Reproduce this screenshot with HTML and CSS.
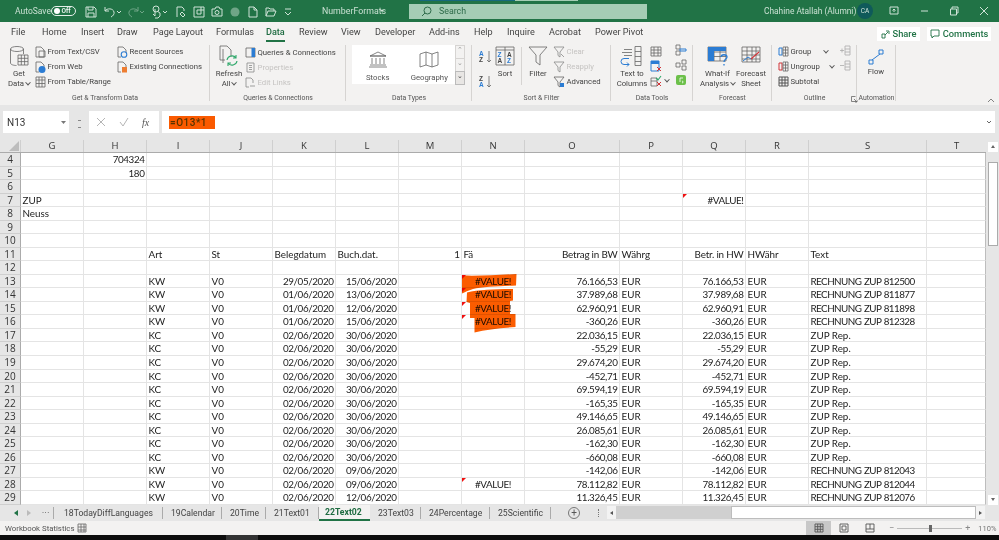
FILE: index.html
```html
<!DOCTYPE html>
<html lang="en">
<head>
<meta charset="utf-8">
<title>NumberFormats</title>
<link rel="stylesheet" href="styles.css">
</head>
<body>
<div class="app">
  <header class="title">
    <span class="autosave">AutoSave</span>
    <span class="toggle"><i></i>Off</span>
    <div class="qat">
      <svg width="12" height="12" viewBox="0 0 12 12"><path d="M1 1h8l2 2v8H1zM3 1v3h5V1M3 11V7h6v4"/></svg>
      <svg class="m7" width="12" height="12" viewBox="0 0 12 12"><path d="M1 1v4h4M1 5c2-3 8-3 9 1 .5 2-1 4-3 5"/></svg>
      <svg class="car" width="6" height="12" viewBox="0 0 6 12"><path d="M1 5l2 2 2-2"/></svg>
      <svg class="m5 dim" width="12" height="12" viewBox="0 0 12 12"><path d="M11 1v4H7M11 5C9 2 3 2 2 6c-.5 2 1 4 3 5"/></svg>
      <svg class="car dim" width="6" height="12" viewBox="0 0 6 12"><path d="M1 5l2 2 2-2"/></svg>
      <svg class="m5" width="12" height="14" viewBox="0 0 12 14"><circle cx="6" cy="4" r="3"/><path d="M5 4v7l-2-2M7 6l3 2v3l-2 2H5"/></svg>
      <svg class="car" width="6" height="12" viewBox="0 0 6 12"><path d="M1 5l2 2 2-2"/></svg>
      <svg class="m8" width="12" height="12" viewBox="0 0 12 12"><path d="M2 11V1h5l2 2v2M5 8l2-2 3 3-2 2z"/></svg>
      <svg class="m6" width="12" height="12" viewBox="0 0 12 12"><path d="M1 1h10v10H1zM4 4h4v4H4zM8 1v3h3"/></svg>
      <svg class="m6" width="12" height="12" viewBox="0 0 12 12"><path d="M1 3h3l1-2h3l1 2h2v7H1z"/><circle cx="6" cy="6.5" r="2"/></svg>
      <svg class="m6 dim" width="12" height="12" viewBox="0 0 12 12"><circle class="fil" cx="6" cy="6" r="4.500"/></svg>
      <svg class="m6" width="12" height="12" viewBox="0 0 12 12"><path d="M2 1h5l3 3v7H2zM7 1v3h3"/></svg>
      <svg class="m6" width="12" height="12" viewBox="0 0 12 12"><path d="M1 10V2h3l1 1h4v2M1 10l2-5h8l-2 5z"/></svg>
      <svg class="m8" width="8" height="12" viewBox="0 0 8 12"><path d="M1 3h6M1 6l3 3 3-3"/></svg>
    </div>
    <span class="docname">NumberFormats</span>
    <svg class="m4 car" width="6" height="12" viewBox="0 0 6 12"><path class="fil" d="M1 5h4L3 7z"/></svg>
    <div class="search">
      <svg width="11" height="11" viewBox="0 0 11 11"><circle cx="6.500" cy="4.500" r="3.500"/><path d="M4 7l-3 3"/></svg>
      <span>Search</span>
    </div>
    <span class="user">Chahine Atallah (Alumni)</span>
    <span class="avatar">CA</span>
    <div class="winbtns">
      <svg width="10" height="10" viewBox="0 0 10 10"><path d="M1 1h8v7H1zM5 6V3M3.500 4.500L5 3l1.500 1.500"/></svg>
      <svg width="10" height="10" viewBox="0 0 10 10"><path d="M2 5h7"/></svg>
      <svg width="10" height="10" viewBox="0 0 10 10"><path d="M1.500 3h6v6h-6zM3 3V1h6v6H7.500"/></svg>
      <svg width="10" height="10" viewBox="0 0 10 10"><path d="M1 1l8 8M9 1l-8 8"/></svg>
    </div>
    <i class="strip-a"></i><i class="strip-b"></i>
  </header>

  <nav class="tabs">
    <div class="tablist">
      <span>File</span><span>Home</span><span>Insert</span><span>Draw</span><span>Page Layout</span><span>Formulas</span><span class="on">Data</span><span>Review</span><span>View</span><span>Developer</span><span>Add-ins</span><span>Help</span><span>Inquire</span><span>Acrobat</span><span>Power Pivot</span>
    </div>
    <div class="acts">
      <span class="act act-share"><svg width="9" height="10" viewBox="0 0 9 10"><path d="M1 9V5h3v4zM4 6l3-3M5 2h3v3"/></svg>Share</span>
      <span class="act act-comm"><svg width="10" height="10" viewBox="0 0 10 10"><path d="M1 1h8v6H4L2 9V7H1z"/></svg>Comments</span>
    </div>
  </nav>

  <section class="ribbon">
    <div class="grp g1">
      <div class="body">
        <div class="lg w-get">
          <svg width="20" height="22" viewBox="0 0 20 22"><ellipse class="ln" cx="8" cy="4" rx="6.500" ry="2.500"/><path class="ln" d="M1.500 4v14c0 1.500 3 2.500 6 2.500M14.500 4v5"/><path class="ln" d="M9 10h10v10H9zM9 13.300h10M9 16.600h10M12.300 10v10M15.600 10v10"/></svg>
          <span>Get</span><span>Data <u class="cv"></u></span>
        </div>
        <div class="col c-from">
          <div class="si"><svg width="11" height="12" viewBox="0 0 11 12"><path class="ln" d="M1 1h5l3 3v7H1zM4 5h6v6H4z"/></svg>From Text/CSV</div>
          <div class="si"><svg width="11" height="12" viewBox="0 0 11 12"><path class="ln" d="M1 1h5l3 3v3M1 1v10h3"/><circle class="bl" cx="7" cy="8.500" r="3.500"/></svg>From Web</div>
          <div class="si"><svg width="11" height="12" viewBox="0 0 11 12"><path class="ln" d="M1 1h9v10H1zM1 4h9M1 7.500h9M4 1v10M7 1v10"/></svg>From Table/Range</div>
        </div>
        <div class="col">
          <div class="si"><svg width="11" height="12" viewBox="0 0 11 12"><path class="ln" d="M1 1h5l3 3v3M1 1v10h3"/><circle class="blr" cx="7" cy="8.500" r="2.800"/></svg>Recent Sources</div>
          <div class="si"><svg width="11" height="12" viewBox="0 0 11 12"><path class="ln" d="M1 1h5l3 3v3M1 1v10h3"/><rect class="or" x="5" y="6" width="5" height="5.500"/></svg>Existing Connections</div>
        </div>
      </div>
      <div class="lab">Get &amp; Transform Data</div>
    </div>

    <div class="grp g2">
      <div class="body">
        <div class="lg w-ref">
          <svg width="22" height="22" viewBox="0 0 22 22"><path class="ln" d="M2 1h7l4 4v7M2 1v14h5M5 4v14"/><path class="gr" d="M9 15a5 5 0 0 1 9-2M19 16a5 5 0 0 1-9 2M18 10v3h-3M10 21v-3h3"/></svg>
          <span>Refresh</span><span>All <u class="cv"></u></span>
        </div>
        <div class="col c-q">
          <div class="si qc"><svg width="11" height="11" viewBox="0 0 11 11"><path class="ln" d="M1 1h9v9H1z"/><rect class="bf" x="6.500" y="1" width="3.500" height="9"/></svg>Queries &amp; Connections</div>
          <div class="si off"><svg width="11" height="11" viewBox="0 0 11 11"><path class="ln" d="M2 1h7v9H2zM4 3.500h3M4 5.500h3M4 7.500h3"/></svg>Properties</div>
          <div class="si off"><svg width="11" height="11" viewBox="0 0 11 11"><path class="ln" d="M1 1h5l2 2v3M1 1v9h3M5 9h5"/></svg>Edit Links</div>
        </div>
      </div>
      <div class="lab">Queries &amp; Connections</div>
    </div>

    <div class="grp g3">
      <div class="body">
        <div class="gallery">
          <div class="gi">
            <svg width="20" height="17" viewBox="0 0 20 17"><path class="ln" d="M2 5l8-4 8 4zM2 5h16M4 7v6M8 7v6M12 7v6M16 7v6M2 14h16M1 16h18"/></svg>
            <span>Stocks</span>
          </div>
          <div class="gi">
            <svg width="20" height="17" viewBox="0 0 20 17"><path class="ln" d="M1 3l6-2 6 2 6-2v13l-6 2-6-2-6 2zM7 1v13M13 3v13"/></svg>
            <span>Geography</span>
          </div>
        </div>
        <div class="gscroll"><b>⌃</b><b>⌄</b><b class="more">⌄</b></div>
      </div>
      <div class="lab">Data Types</div>
    </div>

    <div class="grp g4">
      <div class="body">
        <div class="col c-az">
          <svg class="az" width="13" height="13" viewBox="0 0 13 13"><text class="azt" x="0" y="6">A</text><text class="azt b" x="0" y="12">Z</text><path class="ln" d="M10 1v11M8 10l2 2 2-2"/></svg>
          <svg class="az" width="13" height="13" viewBox="0 0 13 13"><text class="azt b" x="0" y="6">Z</text><text class="azt" x="0" y="12">A</text><path class="ln" d="M10 1v11M8 10l2 2 2-2"/></svg>
        </div>
        <div class="lg w-sort">
          <svg width="20" height="20" viewBox="0 0 20 20"><path class="ln" d="M1 1h18v18H1zM10 1v18M1 4h18"/><text class="azt" x="2.500" y="11">Z</text><text class="azt b" x="2.500" y="17">A</text><text class="azt b" x="12" y="11">A</text><text class="azt" x="12" y="17">Z</text></svg>
          <span>Sort</span>
        </div>
        <i class="vsep"></i>
        <div class="lg w-fil">
          <svg width="20" height="20" viewBox="0 0 20 20"><path class="ln" d="M1 1h18l-7 8v10l-4-3V9z"/></svg>
          <span>Filter</span>
        </div>
        <div class="col c-f">
          <div class="si off"><svg width="12" height="12" viewBox="0 0 12 12"><path class="ln" d="M1 1h10L7 6v5L5 9.500V6zM8 8l3 3"/></svg>Clear</div>
          <div class="si off"><svg width="12" height="12" viewBox="0 0 12 12"><path class="ln" d="M1 1h10L7 6v5L5 9.500V6z"/></svg>Reapply</div>
          <div class="si"><svg width="12" height="12" viewBox="0 0 12 12"><path class="ln" d="M1 1h10L7 6v5L5 9.500V6z"/><rect class="bl" x="7" y="7" width="4" height="4"/></svg>Advanced</div>
        </div>
      </div>
      <div class="lab">Sort &amp; Filter</div>
    </div>

    <div class="grp g5">
      <div class="body">
        <div class="lg w-ttc">
          <svg width="24" height="21" viewBox="0 0 24 21"><path class="ln" d="M4 4h8M2 7h10M4 10h8M15 1h6v19h-6zM15 6h6M15 11h6M15 16h6"/><path class="bs" d="M9 13H4a3 3 0 0 0 0 6h5M7 17l2 2-2 2"/></svg>
          <span>Text to</span><span>Columns</span>
        </div>
        <div class="col c-t1">
          <svg width="12" height="12" viewBox="0 0 12 12"><path class="ln" d="M1 2h10v9H1zM1 5h10M1 8h10M4 2v9M8 2v9"/></svg>
          <svg width="12" height="12" viewBox="0 0 12 12"><path class="bs" d="M1 1h8v10H1z"/><rect class="bf" x="1" y="1" width="8" height="3"/><path class="rd" d="M7 7l4 4M11 7l-4 4"/></svg>
          <div class="t1r"><svg width="12" height="12" viewBox="0 0 12 12"><path class="ln" d="M1 3h6v8H1zM1 6h6"/><path class="gr" d="M6 3l2 2 3-4"/><path class="rd" d="M7 7l4 4M11 7l-4 4"/></svg><u class="cv"></u></div>
        </div>
        <div class="col c-t2">
          <svg width="12" height="12" viewBox="0 0 12 12"><path class="ln" d="M1 1h4v4H1zM1 7h4v4H1z"/><path class="bs" d="M5 5h6v2H5z"/></svg>
          <svg width="12" height="12" viewBox="0 0 12 12"><path class="ln" d="M1 4h4v4H1zM7 1h4v4H7zM7 7h4v4H7z"/></svg>
          <svg width="12" height="12" viewBox="0 0 12 12"><rect class="grf" x="1" y="1" width="10" height="10" rx="2"/><path class="wh" d="M5 8V4h3M7 9a1 1 0 1 0 0-2"/></svg>
        </div>
      </div>
      <div class="lab">Data Tools</div>
    </div>

    <div class="grp g6">
      <div class="body">
        <div class="lg w-wi">
          <svg width="21" height="20" viewBox="0 0 21 20"><path class="ln" d="M1 1h18v14H1zM1 6h18M1 10.500h18M7 1v14M13 1v14"/><rect class="bf" x="1" y="1" width="18" height="4"/><rect class="bf" x="1" y="5" width="6" height="10"/><path class="bq" d="M14 11c0-3 6-3 6 0 0 2-3 2-3 5M17 18v1.500"/></svg>
          <span>What-If</span><span>Analysis <u class="cv"></u></span>
        </div>
        <div class="lg w-fc">
          <svg width="20" height="20" viewBox="0 0 20 20"><path class="ln" d="M1 1h18v15H1zM1 5h18M1 9h18M1 13h18M6 1v15M11 1v15M15 1v15"/><path class="bs" d="M2 15l5-4 3 2"/><path class="rdl" d="M10 13l8-7"/></svg>
          <span>Forecast</span><span>Sheet</span>
        </div>
      </div>
      <div class="lab">Forecast</div>
    </div>

    <div class="grp g7">
      <div class="body">
        <div class="col c-o">
          <div class="si"><svg width="11" height="11" viewBox="0 0 11 11"><path class="bs" d="M1 2h3v7H1z"/><path class="ln" d="M5 1h5v9H5zM5 4h5M5 7h5M7.500 1v9"/></svg>Group<u class="cv cv-g"></u></div>
          <div class="si"><svg width="11" height="11" viewBox="0 0 11 11"><path class="rd" d="M1 2h3v7H1z"/><path class="ln" d="M5 1h5v9H5zM5 4h5M5 7h5M7.500 1v9"/></svg>Ungroup<u class="cv cv-u"></u></div>
          <div class="si"><svg width="11" height="11" viewBox="0 0 11 11"><path class="ln2" d="M1 1h9v9H1zM1 4h9M1 7h9M4 1v9M7 1v9"/></svg>Subtotal</div>
        </div>
        <div class="col c-o2">
          <svg class="dimmed" width="11" height="11" viewBox="0 0 11 11"><path class="ln" d="M5 1h5v9H5zM5 4h5M5 7h5M0 5.500h4M2 3.500v4"/></svg>
          <svg class="dimmed" width="11" height="11" viewBox="0 0 11 11"><path class="ln" d="M5 1h5v9H5zM5 4h5M5 7h5M0 5.500h4"/></svg>
        </div>
      </div>
      <div class="lab">Outline</div>
      <svg class="launch" width="7" height="7" viewBox="0 0 7 7"><path class="ln" d="M.500.500h4M.500.500v5h5V3M3 3l3 3M4 6h2V4"/></svg>
    </div>

    <div class="grp g8">
      <div class="body">
        <div class="lg w-flow">
          <svg width="16" height="16" viewBox="0 0 16 16"><path class="bs" d="M1 11h4v4H1zM11 1h4v4h-4zM4 11l8-6"/></svg>
          <span>Flow</span>
        </div>
      </div>
      <div class="lab">Automation</div>
    </div>
    <svg class="collapse" width="8" height="6" viewBox="0 0 8 6"><path class="ln" d="M1 5l3-3 3 3"/></svg>
  </section>

  <section class="fbar">
    <div class="namebox">N13<svg width="5" height="3" viewBox="0 0 5 3"><path d="M0 0h5L2.500 3z"/></svg></div>
    <div class="grip"></div>
    <div class="fxbox">
      <svg width="10" height="10" viewBox="0 0 10 10"><path d="M1 1l8 8M9 1L1 9"/></svg>
      <svg width="10" height="10" viewBox="0 0 10 10"><path d="M1 5l3 4 5-8"/></svg>
      <span>fx</span>
    </div>
    <div class="finput"><span class="fhl">=O13*1</span><svg width="6" height="4" viewBox="0 0 6 4"><path d="M1 1l2 2 2-2"/></svg></div>
  </section>

  <section class="sheet">
    <div class="grid">
      <div class="hd">
        <span class="corner"></span><span>G</span><span>H</span><span>I</span><span>J</span><span>K</span><span>L</span><span>M</span><span>N</span><span>O</span><span>P</span><span>Q</span><span>R</span><span>S</span><span>T</span>
      </div>
      <div class="row"><span class="rh">4</span><span></span><span class="r">704324</span><span></span><span></span><span></span><span></span><span></span><span></span><span></span><span></span><span></span><span></span><span></span><span></span></div>
      <div class="row"><span class="rh">5</span><span></span><span class="r">180</span><span></span><span></span><span></span><span></span><span></span><span></span><span></span><span></span><span></span><span></span><span></span><span></span></div>
      <div class="row"><span class="rh">6</span><span></span><span></span><span></span><span></span><span></span><span></span><span></span><span></span><span></span><span></span><span></span><span></span><span></span><span></span></div>
      <div class="row"><span class="rh">7</span><span>ZUP</span><span></span><span></span><span></span><span></span><span></span><span></span><span></span><span></span><span></span><span class="r note">#VALUE!</span><span></span><span></span><span></span></div>
      <div class="row"><span class="rh">8</span><span>Neuss</span><span></span><span></span><span></span><span></span><span></span><span></span><span></span><span></span><span></span><span></span><span></span><span></span><span></span></div>
      <div class="row"><span class="rh">9</span><span></span><span></span><span></span><span></span><span></span><span></span><span></span><span></span><span></span><span></span><span></span><span></span><span></span><span></span></div>
      <div class="row"><span class="rh">10</span><span></span><span></span><span></span><span></span><span></span><span></span><span></span><span></span><span></span><span></span><span></span><span></span><span></span><span></span></div>
      <div class="row"><span class="rh">11</span><span></span><span></span><span>Art</span><span>St</span><span>Belegdatum</span><span>Buch.dat.</span><span class="r">1</span><span>Fä</span><span class="rt">Betrag in BW</span><span>Währg</span><span class="rt">Betr. in HW</span><span>HWähr</span><span>Text</span><span></span></div>
      <div class="row"><span class="rh">12</span><span></span><span></span><span></span><span></span><span></span><span></span><span></span><span></span><span></span><span></span><span></span><span></span><span></span><span></span></div>
      <div class="row"><span class="rh">13</span><span></span><span></span><span>KW</span><span>V0</span><span class="r">29/05/2020</span><span class="r">15/06/2020</span><span></span><span class="m note">#VALUE!</span><span class="r">76.166,53</span><span>EUR</span><span class="r">76.166,53</span><span>EUR</span><span class="t">RECHNUNG ZUP 812500</span><span></span></div>
      <div class="row"><span class="rh">14</span><span></span><span></span><span>KW</span><span>V0</span><span class="r">01/06/2020</span><span class="r">13/06/2020</span><span></span><span class="m note">#VALUE!</span><span class="r">37.989,68</span><span>EUR</span><span class="r">37.989,68</span><span>EUR</span><span class="t">RECHNUNG ZUP 811877</span><span></span></div>
      <div class="row"><span class="rh">15</span><span></span><span></span><span>KW</span><span>V0</span><span class="r">01/06/2020</span><span class="r">12/06/2020</span><span></span><span class="m note">#VALUE!</span><span class="r">62.960,91</span><span>EUR</span><span class="r">62.960,91</span><span>EUR</span><span class="t">RECHNUNG ZUP 811898</span><span></span></div>
      <div class="row"><span class="rh">16</span><span></span><span></span><span>KW</span><span>V0</span><span class="r">01/06/2020</span><span class="r">15/06/2020</span><span></span><span class="m note">#VALUE!</span><span class="r">-360,26</span><span>EUR</span><span class="r">-360,26</span><span>EUR</span><span class="t">RECHNUNG ZUP 812328</span><span></span></div>
      <div class="row"><span class="rh">17</span><span></span><span></span><span>KC</span><span>V0</span><span class="r">02/06/2020</span><span class="r">30/06/2020</span><span></span><span></span><span class="r">22.036,15</span><span>EUR</span><span class="r">22.036,15</span><span>EUR</span><span>ZUP Rep.</span><span></span></div>
      <div class="row"><span class="rh">18</span><span></span><span></span><span>KC</span><span>V0</span><span class="r">02/06/2020</span><span class="r">30/06/2020</span><span></span><span></span><span class="r">-55,29</span><span>EUR</span><span class="r">-55,29</span><span>EUR</span><span>ZUP Rep.</span><span></span></div>
      <div class="row"><span class="rh">19</span><span></span><span></span><span>KC</span><span>V0</span><span class="r">02/06/2020</span><span class="r">30/06/2020</span><span></span><span></span><span class="r">29.674,20</span><span>EUR</span><span class="r">29.674,20</span><span>EUR</span><span>ZUP Rep.</span><span></span></div>
      <div class="row"><span class="rh">20</span><span></span><span></span><span>KC</span><span>V0</span><span class="r">02/06/2020</span><span class="r">30/06/2020</span><span></span><span></span><span class="r">-452,71</span><span>EUR</span><span class="r">-452,71</span><span>EUR</span><span>ZUP Rep.</span><span></span></div>
      <div class="row"><span class="rh">21</span><span></span><span></span><span>KC</span><span>V0</span><span class="r">02/06/2020</span><span class="r">30/06/2020</span><span></span><span></span><span class="r">69.594,19</span><span>EUR</span><span class="r">69.594,19</span><span>EUR</span><span>ZUP Rep.</span><span></span></div>
      <div class="row"><span class="rh">22</span><span></span><span></span><span>KC</span><span>V0</span><span class="r">02/06/2020</span><span class="r">30/06/2020</span><span></span><span></span><span class="r">-165,35</span><span>EUR</span><span class="r">-165,35</span><span>EUR</span><span>ZUP Rep.</span><span></span></div>
      <div class="row"><span class="rh">23</span><span></span><span></span><span>KC</span><span>V0</span><span class="r">02/06/2020</span><span class="r">30/06/2020</span><span></span><span></span><span class="r">49.146,65</span><span>EUR</span><span class="r">49.146,65</span><span>EUR</span><span>ZUP Rep.</span><span></span></div>
      <div class="row"><span class="rh">24</span><span></span><span></span><span>KC</span><span>V0</span><span class="r">02/06/2020</span><span class="r">30/06/2020</span><span></span><span></span><span class="r">26.085,61</span><span>EUR</span><span class="r">26.085,61</span><span>EUR</span><span>ZUP Rep.</span><span></span></div>
      <div class="row"><span class="rh">25</span><span></span><span></span><span>KC</span><span>V0</span><span class="r">02/06/2020</span><span class="r">30/06/2020</span><span></span><span></span><span class="r">-162,30</span><span>EUR</span><span class="r">-162,30</span><span>EUR</span><span>ZUP Rep.</span><span></span></div>
      <div class="row"><span class="rh">26</span><span></span><span></span><span>KC</span><span>V0</span><span class="r">02/06/2020</span><span class="r">30/06/2020</span><span></span><span></span><span class="r">-660,08</span><span>EUR</span><span class="r">-660,08</span><span>EUR</span><span>ZUP Rep.</span><span></span></div>
      <div class="row"><span class="rh">27</span><span></span><span></span><span>KW</span><span>V0</span><span class="r">02/06/2020</span><span class="r">09/06/2020</span><span></span><span></span><span class="r">-142,06</span><span>EUR</span><span class="r">-142,06</span><span>EUR</span><span class="t">RECHNUNG ZUP 812043</span><span></span></div>
      <div class="row"><span class="rh">28</span><span></span><span></span><span>KW</span><span>V0</span><span class="r">02/06/2020</span><span class="r">09/06/2020</span><span></span><span class="m note">#VALUE!</span><span class="r">78.112,82</span><span>EUR</span><span class="r">78.112,82</span><span>EUR</span><span class="t">RECHNUNG ZUP 812044</span><span></span></div>
      <div class="row"><span class="rh">29</span><span></span><span></span><span>KW</span><span>V0</span><span class="r">02/06/2020</span><span class="r">12/06/2020</span><span></span><span></span><span class="r">11.326,45</span><span>EUR</span><span class="r">11.326,45</span><span>EUR</span><span class="t">RECHNUNG ZUP 812076</span><span></span></div>
      <svg class="scribble" width="56" height="60" viewBox="0 0 56 60">
        <path d="M0 1.500C18 2 36 1 54.500 0L54 11.500C40 12 20 12.500 11 15 6 16.500 3 18 0 19.500Z"/>
        <path d="M5 18.500C16 15.500 36 15 51 15L51 26.500 48 27 48 40 53.500 40 53.500 53C38 54 24 55.500 12.500 58.500L12.500 44 8 44 8 29 4.500 28Z"/>
      </svg>
    </div>
    <aside class="vscroll">
      <b class="vb up"></b>
      <i class="vthumb"></i>
      <b class="vb down"></b>
    </aside>
  </section>

  <section class="sheettabs">
    <div class="navs"><span class="nav-l"></span><span class="nav-r"></span><span class="nav-d">...</span></div>
    <span class="st w1">18TodayDiffLanguages</span>
    <span class="st w2">19Calendar</span>
    <span class="st w3">20Time</span>
    <span class="st w4">21Text01</span>
    <span class="st st-on w5">22Text02</span>
    <span class="st w6">23Text03</span>
    <span class="st w7">24Percentage</span>
    <span class="st w8">25Scientific</span>
    <span class="plus">+</span>
    <span class="dots"></span>
    <div class="hscroll"><b class="hb"><u class="al"></u></b><i class="hthumb"></i><b class="hb"><u class="ar"></u></b></div>
  </section>

  <footer class="status">
    <span class="wbs">Workbook Statistics</span>
    <svg class="wbi" width="10" height="10" viewBox="0 0 10 10"><path d="M1 1h8v8H1zM1 4h8M1 7h8M4 1v8M7 1v8"/></svg>
    <div class="views">
      <span class="vw vw-on"><svg width="10" height="10" viewBox="0 0 10 10"><path d="M1 1h8v8H1zM1 3.700h8M1 6.300h8M3.700 1v8M6.300 1v8"/></svg></span>
      <span class="vw"><svg width="10" height="10" viewBox="0 0 10 10"><path d="M1 1h8v8H1zM3 3h4v4H3z"/></svg></span>
      <span class="vw"><svg width="10" height="10" viewBox="0 0 10 10"><path d="M1 1h8v8H1zM1 6h8M5 1v5"/></svg></span>
    </div>
    <div class="zoom"><span class="zb">−</span><div class="slider"><i></i></div><span class="zb">+</span></div>
    <span class="pct">110%</span>
  </footer>
  <div class="taskbar"><i></i></div>
</div>
</body>
</html>
```
FILE: styles.css
```css
* { box-sizing: border-box; }
html, body { margin: 0; padding: 0; }
body { width: 999px; height: 540px; overflow: hidden; font-family: Roboto, "Open Sans", sans-serif; color: #333; background: #e6e6e6; }
.app { width: 999px; height: 540px; display: flex; flex-direction: column; }
u { text-decoration: none; }
svg { display: block; flex: none; fill: none; }

/* title bar */
.title { height: 22px; flex: none; background: #217346; display: flex; align-items: center; position: relative; color: #c9e0d2; font-size: 8.500px; padding-left: 15px; }
.title svg { stroke: #cfe3d7; stroke-width: 1; }
.title svg .fil { fill: #cfe3d7; stroke: none; }
.autosave { width: 32px; white-space: nowrap; }
.toggle { margin-left: 4px; width: 25px; height: 10px; border: 1px solid #e5efe9; border-radius: 5px; display: flex; align-items: center; font-size: 6.500px; font-weight: 500; color: #fff; gap: 2px; padding-left: 1.500px; }
.toggle i { width: 6px; height: 6px; border-radius: 50%; background: #fff; }
.qat { display: flex; align-items: center; margin-left: 9px; margin-top: 1px; }
.m7 { margin-left: 7px; } .m5 { margin-left: 5px; } .m8 { margin-left: 7px; } .m6 { margin-left: 6px; } .m4 { margin-left: 3px; }
.car { margin-left: 0; }
.dim { opacity: .45; }
.docname { margin-left: 30px; font-size: 8.800px; width: 57px; white-space: nowrap; }
.search { margin-left: 24px; width: 238px; height: 15px; background: #a5cdb5; display: flex; align-items: center; color: #2d6a49; font-size: 8.800px; padding-left: 12px; gap: 7px; }
.search svg { stroke: #2d6a49; }
.user { margin-left: 117px; font-size: 8.400px; white-space: nowrap; width: 89px; }
.avatar { margin-left: 4px; width: 16px; height: 16px; border-radius: 50%; background: #0f5a5a; color: #cfe3d7; font-size: 6.500px; display: flex; align-items: center; justify-content: center; }
.winbtns { margin-left: 16px; display: flex; gap: 20px; }
.strip-a, .strip-b { position: absolute; top: 0; height: 1px; }
.strip-a { left: 420px; width: 95px; background: #16697c; }
.strip-b { left: 515px; width: 63px; background: #a5cdb5; }

/* tabs */
.tabs { height: 21px; flex: none; background: #f3f2f1; display: flex; align-items: center; justify-content: space-between; padding: 2px 8px 0 11px; }
.tablist { display: grid; grid-template-columns: 31px 39px 36px 36px 63px 50px 33px 42px 34px 54px 45px 33px 42px 46px 60px; font-size: 9.100px; color: #444; height: 19px; line-height: 16px; }
.tablist span { white-space: nowrap; position: relative; }
.tablist .on { font-weight: 500; color: #1e6b41; }
.tablist .on::after { content: ""; position: absolute; left: 0; top: 16px; width: 19px; height: 2px; background: #217346; }
.acts { display: flex; gap: 7px; }
.act { height: 14px; background: #fff; display: flex; align-items: center; font-size: 9.300px; font-weight: 500; color: #217346; gap: 3px; justify-content: center; }
.act svg { stroke: #217346; stroke-width: .9; }
.act-share { width: 43px; }
.act-comm { width: 64px; }

/* ribbon */
.ribbon { height: 62px; flex: none; background: #f3f2f1; display: flex; position: relative; font-size: 7.750px; color: #444; }
.grp { position: relative; height: 62px; display: flex; flex-direction: column; flex: none; }
.grp::after { content: ""; position: absolute; right: 0; top: 2px; height: 56px; width: 1px; background: #d6d4d2; }
.body { height: 49px; display: flex; flex: none; }
.lab { height: 12px; line-height: 12px; text-align: center; font-size: 6.900px; color: #555; white-space: nowrap; }
.g1 { width: 210px; } .g2 { width: 136px; } .g3 { width: 126px; } .g4 { width: 139px; } .g5 { width: 82px; } .g6 { width: 79px; } .g7 { width: 85px; } .g8 { width: 39px; }
.g1 .body { padding-left: 7px; } .g2 .body { padding-left: 5px; } .g3 .body { padding-left: 6px; } .g4 .body { padding-left: 7px; } .g5 .body { padding-left: 5px; } .g6 .body { padding-left: 6px; } .g7 .body { padding-left: 6px; }
.lg { display: flex; flex-direction: column; align-items: center; padding-top: 2px; line-height: 10.300px; text-align: center; white-space: nowrap; flex: none; }
.lg svg { height: 22px; margin-bottom: 2px; }
.w-get { width: 24px; } .w-ref { width: 28px; } .w-sort { width: 20px; margin-left: 3px; } .w-fil { width: 20px; margin-left: 6px; } .w-ttc { width: 32px; } .w-wi { width: 37px; } .w-fc { width: 30px; } .w-flow { width: 38px; }
.w-flow svg { margin-top: 3px; margin-bottom: 1px; height: 18px; }
.col { display: flex; flex-direction: column; flex: none; padding-top: 1px; }
.c-from { width: 82px; margin-left: 4px; }
.c-q { margin-left: 2px; }
.si { height: 15px; display: flex; align-items: center; gap: 1.500px; white-space: nowrap; }
.qc { height: 16px; }
.off { color: #b5b3b1; opacity: .75; }
.ln { stroke: #666; stroke-width: .8; fill: none; }
.ln2 { stroke: #555; stroke-width: 1; fill: none; }
.gr { stroke: #2ea86a; stroke-width: 1.100; fill: none; }
.bs { stroke: #2b7cd3; stroke-width: 1; fill: none; }
.bq { stroke: #2b7cd3; stroke-width: 1.300; fill: none; }
.bf { fill: #2b7cd3; stroke: none; }
.bl { fill: #2b7cd3; stroke: none; }
.blr { fill: none; stroke: #2b7cd3; stroke-width: 1.100; }
.or { fill: #ed7d31; stroke: none; }
.rd { stroke: #d13438; stroke-width: 1; fill: none; }
.rdl { stroke: #d13438; stroke-width: 1.100; fill: none; }
.grf { fill: #6cc04a; stroke: none; }
.wh { stroke: #fff; stroke-width: .8; fill: none; }
.cv { display: inline-block; width: 4px; height: 4px; border-right: 1px solid #555; border-bottom: 1px solid #555; transform: rotate(45deg) translate(-1px, -1px); }
.gallery { margin-top: 2px; width: 103px; height: 39px; background: #fff; display: flex; flex: none; }
.gi { width: 51.500px; display: flex; flex-direction: column; align-items: center; padding-top: 6px; gap: 5px; line-height: 10px; color: #555; }
.gscroll { margin-top: 2px; width: 10px; height: 39px; display: flex; flex-direction: column; flex: none; }
.gscroll b { flex: 1; font-weight: 400; border: 1px solid #d6d4d2; background: #f3f2f1; font-size: 7px; line-height: 8px; text-align: center; color: #999; margin-bottom: -1px; }
.gscroll .more { background: #e8e6e4; color: #444; border-color: #bbb; }
.c-az { width: 13px; gap: 12px; padding-top: 7px; }
.azt { font-family: "Liberation Sans", sans-serif; font-size: 6.500px; font-weight: 700; fill: #2b7cd3; }
.azt.b { fill: #444; }
.vsep { width: 1px; height: 38px; margin: 4px 0 0 6px; background: #d6d4d2; flex: none; }
.c-f { margin-left: 5px; }
.c-t1 { margin-left: 2px; width: 25px; padding-top: 2px; gap: 3px; }
.t1r { display: flex; align-items: center; gap: 3px; }
.c-t2 { padding-top: 1px; gap: 3px; }
.c-o { width: 62px; }
.c-o2 { gap: 4px; padding-top: 2px; }
.dimmed { opacity: .5; }
.cv-g { position: relative; left: 11px; } .cv-u { position: relative; left: 9px; }
.launch { position: absolute; left: 79px; top: 53px; }
.collapse { position: absolute; left: 987px; top: 54px; }

/* formula bar */
.fbar { height: 29px; flex: none; background: #e6e6e6; display: flex; padding: 6px 4px 1px 3px; }
.namebox { width: 66px; height: 22px; background: #fff; display: flex; align-items: center; justify-content: space-between; font-size: 10px; padding: 0 3px 0 4px; color: #333; }
.namebox svg { fill: #777; }
.grip { width: 20px; position: relative; }
.grip::after { content: ""; position: absolute; left: 9px; top: 9px; width: 2px; height: 6px; border-top: 1px dotted #888; border-bottom: 1px dotted #888; }
.fxbox { width: 70px; height: 22px; background: #fff; display: flex; align-items: center; padding-left: 7px; gap: 13px; }
.fxbox svg { stroke: #b5b5b5; stroke-width: 1; }
.fxbox span { font-family: "Liberation Serif", serif; font-style: italic; font-size: 10px; color: #555; }
.finput { margin-left: 3px; flex: 1; height: 22px; background: #fff; display: flex; align-items: center; justify-content: space-between; padding: 0 3px 0 7px; }
.finput svg { stroke: #666; }
.fhl { background: #fa5a00; width: 46px; height: 13px; line-height: 13px; padding-left: 1px; font-size: 10px; color: #553400; font-weight: 500; letter-spacing: .5px; }

/* sheet */
.sheet { height: 371px; flex: none; display: flex; background: #fff; }
.grid { width: 986px; position: relative; font-family: Lato, "Open Sans", sans-serif; font-size: 9.850px; color: #222; }
.hd, .row { display: grid; grid-template-columns: 21px 63px 63px 63px 63px 63px 63px 63px 63px 95px 63px 63px 63px 118px 59px; }
.hd { height: 19px; background: #e6e6e6; border-bottom: 1px solid #ababab; font-family: "Open Sans", sans-serif; font-size: 9.500px; color: #333; padding-top: 6px; line-height: 12px; text-align: center; }
.hd span { border-right: 1px solid #cfcfcf; position: relative; }
.hd span:last-child { border-right: 0; }
.corner::after { content: ""; position: absolute; right: 1px; top: 1px; border-style: solid; border-width: 0 0 10px 10px; border-color: transparent transparent #bdbdbd transparent; }
.row { height: 13.540px; line-height: 12.500px; }
.row span { display: block; border-right: 1px solid #e4e4e4; border-bottom: 1px solid #e4e4e4; padding: 0 1.500px; white-space: nowrap; position: relative; z-index: 1; overflow: visible; }
.row span:last-child { border-right: 1px solid #bdbdbd; }
.row .rh { background: #e6e6e6; border-right: 1px solid #ababab; border-bottom: 1px solid #cfcfcf; font-family: "Open Sans", sans-serif; text-align: center; font-size: 10px; color: #333; padding: 0; }
.r { text-align: right; letter-spacing: -.4px; }
.rt { text-align: right; letter-spacing: -.2px; }
.m { text-align: center; letter-spacing: -.4px; }
.t { letter-spacing: -.55px; word-spacing: .6px; }
.note::before { content: ""; position: absolute; left: 0; top: 0; border-style: solid; border-width: 4px 4px 0 0; border-color: #f01010 transparent transparent transparent; }
.scribble { position: absolute; left: 462px; top: 140px; z-index: 2; mix-blend-mode: multiply; }
.scribble path { fill: #fb5c00; }

/* scrollbars */
.vscroll { width: 13px; background: #e6e6e6; display: flex; flex-direction: column; align-items: center; padding: 8px 0 0 1px; position: relative; }
.vb { width: 10px; height: 10px; background: #fff; position: relative; display: block; flex: none; }
.vb::after { content: ""; position: absolute; left: 2.500px; top: 3px; border-style: solid; border-color: transparent; border-width: 0 2.500px 3px; border-bottom-color: #666; }
.vthumb { margin-top: 10px; width: 10px; height: 84px; background: #fff; border: 1px solid #ababab; display: block; flex: none; }
.down { margin-top: auto; margin-bottom: 0; }
.down::after { border-width: 3px 2.500px 0; border-top-color: #666; border-bottom-color: transparent; }

/* sheet tabs */
.sheettabs { height: 16px; flex: none; background: #e6e6e6; display: flex; align-items: stretch; font-size: 8.650px; color: #444; white-space: nowrap; position: relative; }
.navs { width: 54px; display: flex; align-items: center; padding-left: 14px; gap: 9px; border-right: 1px solid #aaa; margin: 2px 0 2px; }
.nav-l { border-style: solid; border-color: transparent #217346 transparent transparent; border-width: 3px 4px 3px 0; }
.nav-r { border-style: solid; border-color: transparent transparent transparent #bbb; border-width: 3px 0 3px 4px; }
.nav-d { font-size: 8px; line-height: 6px; padding-bottom: 4px; margin-left: 2px; letter-spacing: .5px; }
.st { display: flex; align-items: center; padding-left: 8px; position: relative; flex: none; }
.st::after { content: ""; position: absolute; right: 0; top: 2px; bottom: 2px; width: 1px; background: #aaa; }
.w1 { width: 109px; padding-left: 10px; } .w2 { width: 59px; } .w3 { width: 44px; } .w4 { width: 53px; } .w5 { width: 51px; } .w6 { width: 51px; } .w7 { width: 69px; } .w8 { width: 61px; }
.st-on { background: #f3f2f1; color: #1e6b41; font-weight: 700; border-bottom: 2px solid #217346; padding-left: 6px; }
.st-on::after { display: none; }
.plus { position: absolute; left: 568px; top: 2px; width: 12px; height: 12px; border: 1px solid #777; border-radius: 50%; font-size: 10px; line-height: 9px; text-align: center; color: #555; }
.dots { position: absolute; left: 598px; top: 4px; height: 8px; width: 1px; border-left: 1px dotted #777; }
.hscroll { position: absolute; left: 607px; top: 1px; width: 378px; height: 13px; background: #d0d0d0; display: flex; justify-content: space-between; align-items: stretch; }
.hb { width: 9px; background: #f3f3f3; display: flex; align-items: center; justify-content: center; flex: none; }
.hb:first-child { margin-right: 115px; }
.hthumb { flex: 1; background: #fff; border: 1px solid #bdbdbd; display: block; }
.al { border-style: solid; border-color: transparent #555 transparent transparent; border-width: 2.500px 3px 2.500px 0; }
.ar { border-style: solid; border-color: transparent transparent transparent #555; border-width: 2.500px 0 2.500px 3px; }

/* status */
.status { height: 14px; flex: none; background: #f3f2f1; display: flex; align-items: center; font-size: 7.800px; color: #555; position: relative; padding-left: 5px; }
.wbs { width: 72px; white-space: nowrap; }
.wbi { stroke: #666; stroke-width: .8; }
.views { margin-left: 719px; display: flex; height: 14px; }
.vw { width: 26px; display: flex; align-items: center; justify-content: center; }
.vw svg { stroke: #555; stroke-width: .9; }
.vw-on { background: #c8c8c8; width: 25px; }
.zoom { margin-left: 6px; display: flex; align-items: center; gap: 3px; }
.zb { font-size: 9px; line-height: 10px; color: #888; }
.slider { width: 65px; height: 1px; background: #bbb; position: relative; }
.slider i { position: absolute; left: 32px; top: -3px; width: 3px; height: 7px; background: #666; }
.pct { margin-left: 8px; font-size: 7.500px; color: #777; }
.taskbar { height: 5px; flex: none; background: #0d0d0d; position: relative; }
.taskbar i { position: absolute; left: 226px; width: 32px; top: 0; height: 5px; background: #333; }
```
